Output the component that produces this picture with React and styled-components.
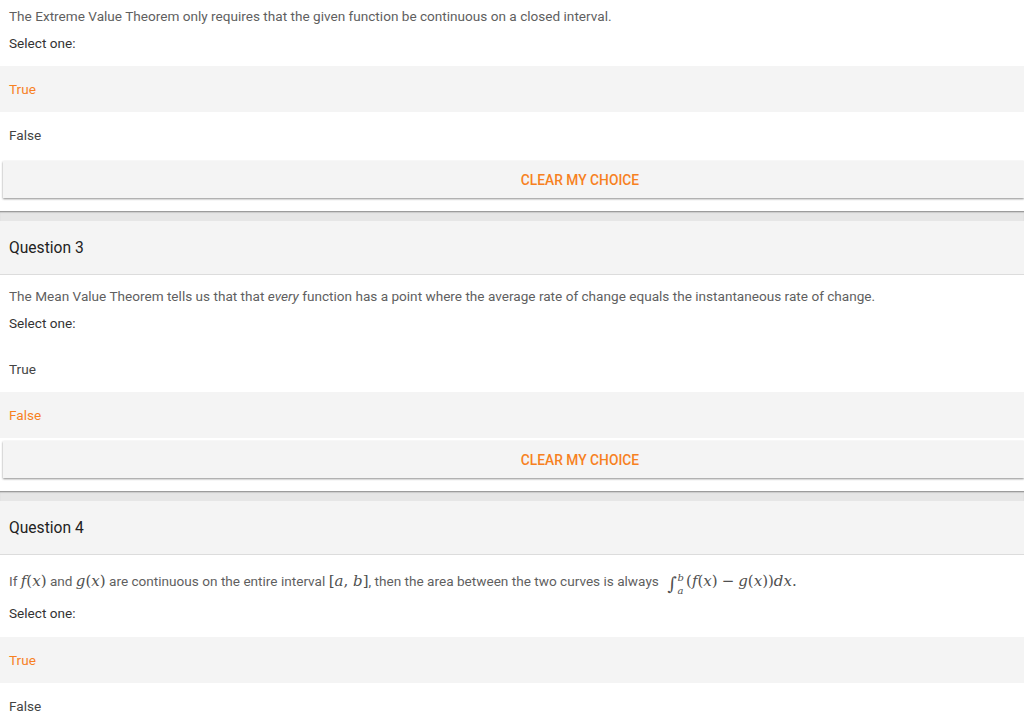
import React from 'react';
import styled, { createGlobalStyle } from 'styled-components';

const GlobalStyle = createGlobalStyle`
  html, body {
    margin: 0;
    padding: 0;
    background: #fff;
    overflow: hidden;
  }
  body {
    font-family: Roboto, "Noto Sans", Arial, sans-serif;
    font-size: 13.6px;
    color: #444;
  }
`;

const Page = styled.div`
  width: 1024px;
  padding-top: 6px;
`;

const Card = styled.section`
  display: flex;
  flex-direction: column;
`;

const Divider = styled.div`
  height: 9px;
  margin-top: 13px;
  background: #e6e6e6;
  border-top: 1px solid #9c9c9c;
  box-shadow: inset 0 1px 1px rgba(0, 0, 0, 0.12);
`;

const Header = styled.h3`
  margin: 0;
  height: 53px;
  display: flex;
  align-items: center;
  padding: 0 9px;
  background: #f4f4f4;
  border-bottom: 1px solid #dcdcdc;
  font-size: 15.6px;
  font-weight: 400;
  color: #222;
`;

const Body = styled.div`
  display: flex;
  flex-direction: column;
  padding: ${({ $top }) => $top}px 0 0;
`;

const QText = styled.div`
  padding: 0 9px;
  line-height: 20px;
  color: #5f5f5f;

  em {
    font-style: italic;
  }
`;

const Prompt = styled.div`
  padding: 0 9px;
  margin-top: ${({ $gap }) => $gap}px;
  line-height: 20px;
  color: #333;
`;

const Answers = styled.div`
  margin-top: ${({ $gap }) => $gap}px;
  display: flex;
  flex-direction: column;
`;

const Option = styled.div`
  height: 46px;
  display: flex;
  align-items: center;
  padding: 0 9px;
  background: ${({ $shade }) => ($shade ? '#f4f4f4' : '#fff')};
  color: ${({ $selected }) => ($selected ? '#f7811f' : '#444')};
`;

const ClearButton = styled.button`
  display: block;
  margin: 3px 0 0 3px;
  width: calc(100% - 3px);
  height: 37px;
  border: none;
  background: #f4f4f4;
  box-shadow: 0 1px 2px rgba(0, 0, 0, 0.45);
  font-family: Roboto, "Noto Sans", Arial, sans-serif;
  font-size: 13.8px;
  font-weight: 500;
  color: #f7811f;
  text-transform: uppercase;
  padding: 0 0 0 133px;
  text-align: center;
  cursor: pointer;
`;

const M = styled.span`
  font-family: "DejaVu Serif", "Liberation Serif", serif;
  font-style: ${({ $up }) => ($up ? 'normal' : 'italic')};
  font-size: 15px;
  color: #505050;
`;

const Op = styled.span`
  font-family: "DejaVu Serif", serif;
  font-size: 15px;
  color: #505050;
  margin: 0 4px;
`;

const Integral = styled.span`
  display: inline-flex;
  align-items: center;
  margin: 0 2px 0 5px;
  vertical-align: -4px;
`;

const IntSign = styled.span`
  font-family: "DejaVu Serif", serif;
  font-size: 18px;
  font-style: normal;
  color: #505050;
  line-height: 22px;
`;

const Limits = styled.span`
  display: inline-flex;
  flex-direction: column;
  justify-content: space-between;
  height: 22px;
  margin-left: 1px;
  font-family: "DejaVu Serif", serif;
  font-style: italic;
  font-size: 10px;
  line-height: 9px;
  color: #505050;
`;

const questions = [
  {
    key: 'q2',
    text: 'The Extreme Value Theorem only requires that the given function be continuous on a closed interval.',
    selected: 'True',
    first: true,
  },
  {
    key: 'q3',
    title: 'Question 3',
    text: (
      <>
        The Mean Value Theorem tells us that that <em>every</em> function has a point where the average rate of change equals the instantaneous rate of change.
      </>
    ),
    selected: 'False',
  },
  {
    key: 'q4',
    title: 'Question 4',
    math: true,
    text: (
      <>
        If <M>f</M><M $up>(</M><M>x</M><M $up>)</M> and <M>g</M><M $up>(</M><M>x</M><M $up>)</M> are continuous on the entire interval{' '}
        <M $up>[</M><M>a</M><M $up>, </M><M>b</M><M $up>]</M>, then the area between the two curves is always{' '}
        <Integral>
          <IntSign>∫</IntSign>
          <Limits>
            <span>b</span>
            <span>a</span>
          </Limits>
        </Integral>
        <M $up>(</M><M>f</M><M $up>(</M><M>x</M><M $up>)</M>
        <Op>−</Op>
        <M>g</M><M $up>(</M><M>x</M><M $up>))</M><M>dx</M><M $up>.</M>
      </>
    ),
    selected: 'True',
    noButton: true,
  },
];

function Question({ q }) {
  const opts = ['True', 'False'];
  return (
    <Card>
      {q.title && (
        <>
          <Divider />
          <Header>{q.title}</Header>
        </>
      )}
      <Body $top={q.first ? 0 : q.math ? 16 : 11}>
        <QText>{q.text}</QText>
        <Prompt $gap={q.math ? 8 : 7}>Select one:</Prompt>
        <Answers $gap={q.math ? 14 : 13}>
          {opts.map((o) => (
            <Option key={o} $shade={o === q.selected} $selected={o === q.selected}>
              {o}
            </Option>
          ))}
        </Answers>
        {!q.noButton && <ClearButton>Clear my choice</ClearButton>}
      </Body>
    </Card>
  );
}

export default function App() {
  return (
    <Page>
      <GlobalStyle />
      {questions.map((q) => (
        <Question key={q.key} q={q} />
      ))}
    </Page>
  );
}
